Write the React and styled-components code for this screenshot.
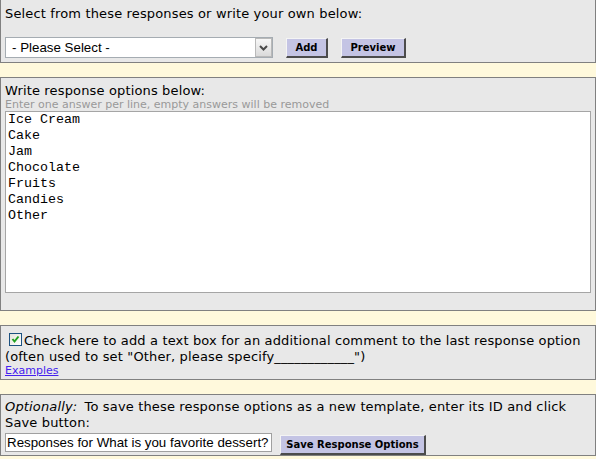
import React from 'react';
import styled, { createGlobalStyle } from 'styled-components';

const GlobalStyle = createGlobalStyle`
  html, body {
    margin: 0;
    padding: 0;
  }
  body {
    background: #fff9dc;
    font-family: "DejaVu Sans", Verdana, sans-serif;
    font-size: 13px;
    line-height: 16px;
    color: #000;
  }
`;

const Page = styled.div`
  display: flex;
  flex-direction: column;
  gap: 14px;
  width: 596px;
`;

const Panel = styled.div`
  background: #e8e8e8;
  border: 1px solid #808080;
  padding: ${(p) => p.$pad || '4px'};

  &:first-child {
    border-top: none;
  }
`;

// Verdana in the original is a touch wider than DejaVu Sans
const Line = styled.div`
  line-height: 16px;
  letter-spacing: 0.15px;

  i {
    margin-right: 3px;
  }
`;

const Hint = styled.div`
  font-size: 11px;
  line-height: 12px;
  color: #999;
`;

const Row = styled.div`
  display: flex;
  align-items: flex-start;
  gap: ${(p) => p.$gap || '13px'};
  margin-top: ${(p) => p.$top || '0'};
`;

const SelectBox = styled.div`
  display: flex;
  width: 268px;
  height: 21px;
  box-sizing: border-box;
  background: #fff;
  border: 1px solid #a5acb2;
`;

const NativeSelect = styled.select`
  flex: 1;
  appearance: none;
  border: none;
  outline: none;
  background: transparent;
  font-family: "Liberation Sans", Arial, sans-serif;
  font-size: 13.33px;
  color: #000;
  padding: 0 0 0 6px;
  margin: 0;
`;

const Arrow = styled.span`
  display: flex;
  align-items: center;
  justify-content: center;
  width: 17px;
  height: 19px;
  box-sizing: border-box;
  border: 1px solid #b9b9b9;
  background: linear-gradient(#f7f7f7, #dadada);
`;

const Button = styled.button`
  width: ${(p) => p.$w}px;
  height: 20px;
  margin-top: ${(p) => p.$top || '1px'};
  padding: 0;
  box-sizing: border-box;
  background: #c4c4e4;
  border-top: 1px solid #f4f4f4;
  border-left: 1px solid #f4f4f4;
  border-right: 2px solid #4c4c4c;
  border-bottom: 2px solid #4c4c4c;
  font-family: "DejaVu Sans", Verdana, sans-serif;
  font-weight: bold;
  font-size: 10px;
  color: #000;
  text-align: center;
`;

const TextArea = styled.textarea`
  display: block;
  width: 586px;
  height: 182px;
  box-sizing: border-box;
  margin: 0 0 17px;
  padding: 0 2px;
  border: 1px solid #a5a5a5;
  background: #fff;
  resize: none;
  outline: none;
  font-family: "Liberation Mono", "Courier New", monospace;
  font-size: 13.33px;
  line-height: 16px;
  color: #000;
  overflow: hidden;
`;

const Check = styled.span`
  display: inline-block;
  width: 13px;
  height: 13px;
  box-sizing: border-box;
  margin: 0 2px 0 4px;
  vertical-align: baseline;
  border: 1px solid #1c5180;
  background: linear-gradient(135deg, #e4e4dc, #fff);
  line-height: 0;
`;

const Link = styled.a`
  display: block;
  font-size: 11px;
  line-height: 12px;
  color: #4422ee;
  text-decoration: underline;
`;

const TextInput = styled.input`
  width: 267px;
  height: 19px;
  margin-top: 1px;
  box-sizing: border-box;
  padding: 0 1px;
  border: 1px solid #a0a0a0;
  background: #fff;
  font-family: "Liberation Sans", Arial, sans-serif;
  font-size: 13.33px;
  color: #000;
  outline: none;
`;

const Chevron = () => (
  <svg width="9" height="6" viewBox="0 0 9 6">
    <polyline points="1,1 4.5,4.5 8,1" fill="none" stroke="#4a4a4a" strokeWidth="2" />
  </svg>
);

const Tick = () => (
  <svg width="11" height="11" viewBox="0 0 11 11">
    <polyline points="2.5,5 4.5,7.5 8.5,2.5" fill="none" stroke="#21a121" strokeWidth="2" />
  </svg>
);

const answers = ['Ice Cream', 'Cake', 'Jam', 'Chocolate', 'Fruits', 'Candies', 'Other'];

export default function App() {
  return (
    <>
      <GlobalStyle />
      <Page>
        <Panel $pad="6px 4px 4px">
          <Line>Select from these responses or write your own below:</Line>
          <Row $top="15px">
            <SelectBox>
              <NativeSelect defaultValue="">
                <option value="">- Please Select -</option>
              </NativeSelect>
              <Arrow>
                <Chevron />
              </Arrow>
            </SelectBox>
            <Button $w={42}>Add</Button>
            <Button $w={65}>Preview</Button>
          </Row>
        </Panel>

        <Panel $pad="5px 4px 0">
          <Line>Write response options below:</Line>
          <Hint>Enter one answer per line, empty answers will be removed</Hint>
          <TextArea defaultValue={answers.join('\n')} />
        </Panel>

        <Panel $pad="7px 4px 2px">
          <Line>
            <Check>
              <Tick />
            </Check>
            Check here to add a text box for an additional comment to the last response option
            (often used to set "Other, please specify____________")
          </Line>
          <Link href="#">Examples</Link>
        </Panel>

        <Panel $pad="4px 4px 0">
          <Line>
            <i>Optionally:</i> To save these response options as a new template, enter its ID and click Save button:
          </Line>
          <Row $gap="8px" $top="1px">
            <TextInput defaultValue="Responses for What is you favorite dessert?" />
            <Button $w={146} $top="3px">Save Response Options</Button>
          </Row>
        </Panel>
      </Page>
    </>
  );
}
